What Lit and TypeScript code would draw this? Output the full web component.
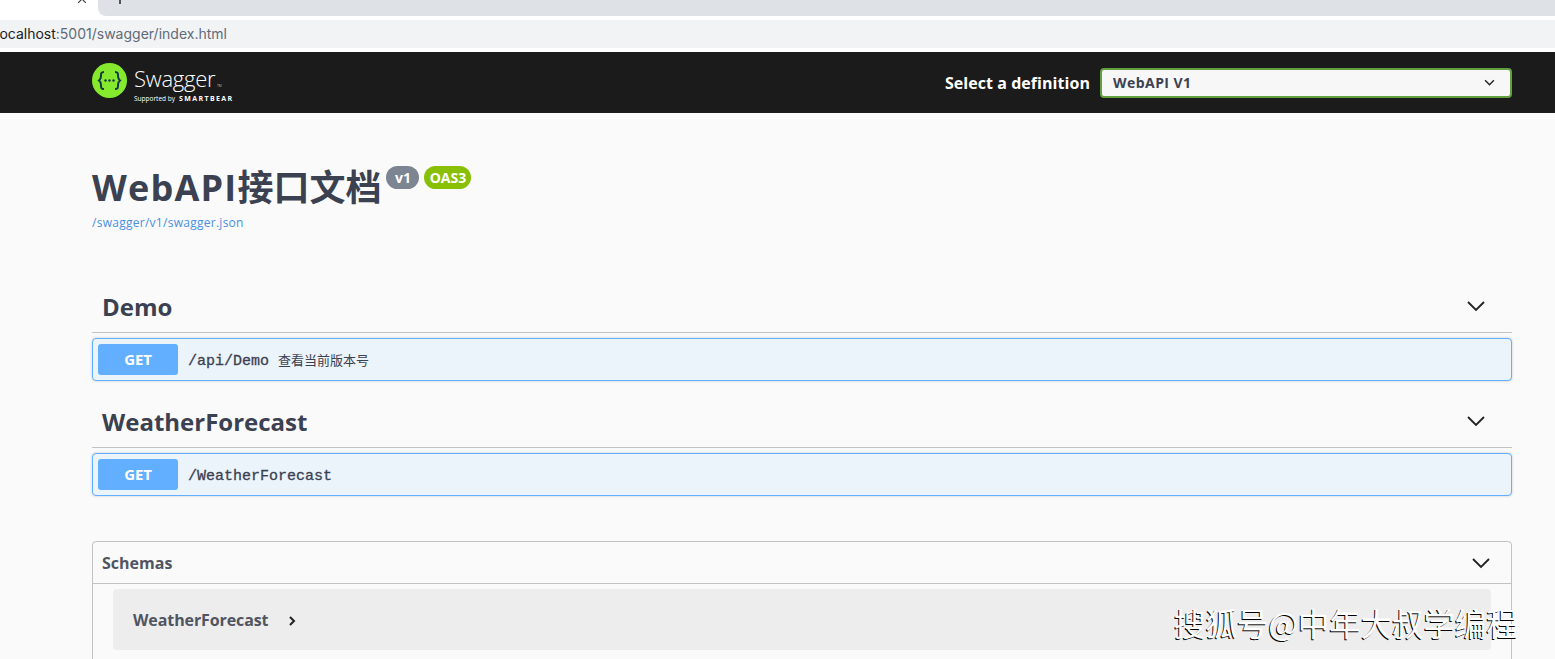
import { LitElement, html, css, svg } from "lit";
import { customElement } from "lit/decorators.js";

const chevronDown = (w: number, sw = 2) => html`
  <svg class="chev" width=${w} height=${w} viewBox="0 0 20 20" fill="none" stroke="#222" stroke-width=${sw}>
    ${svg`<path d="M2 6l8 8 8-8" />`}
  </svg>
`;

@customElement("app-root")
export class AppRoot extends LitElement {
  static styles = css`
    :host {
      display: block;
      position: relative;
      width: 1555px;
      height: 659px;
      overflow: hidden;
      background: #fafafa;
      color: #3b4151;
      font-family: "Open Sans", "Noto Sans CJK SC", sans-serif;
    }

    .tabs {
      display: flex;
      height: 16px;
      background: #fff;
    }
    .tab {
      width: 98px;
      display: flex;
      justify-content: flex-end;
      align-items: flex-start;
      padding-right: 12px;
      box-sizing: border-box;
    }
    .tab svg {
      margin-top: -5px;
    }
    .strip {
      flex: 1;
      background: #dee1e6;
      border-bottom-left-radius: 8px;
      padding-left: 21px;
    }
    .plus {
      width: 2px;
      height: 4px;
      background: #555;
    }
    .addr-wrap {
      padding: 4px 0;
      background: #fff;
    }
    .addr {
      height: 28px;
      line-height: 28px;
      background: #f1f3f4;
      font-family: "Inter", "Noto Sans", sans-serif;
      font-size: 14px;
      color: #5f6b7a;
      white-space: nowrap;
      text-indent: -4px;
    }
    .addr b {
      font-weight: 400;
      color: #202124;
    }

    .topbar {
      height: 61px;
      background: #1b1b1b;
      display: flex;
      align-items: center;
      padding: 0 43px 0 92px;
    }
    .logo {
      display: flex;
      align-items: flex-start;
      gap: 7px;
      height: 35px;
      margin-top: -4px;
      color: #fff;
    }
    .logo-name {
      font-size: 22px;
      line-height: 28px;
      margin-top: 1px;
      font-weight: 300;
      letter-spacing: -0.25px;
      font-family: "Open Sans", sans-serif;
    }
    .tm {
      font-size: 3px;
      line-height: 0;
      letter-spacing: 0;
      margin-left: 2px;
    }
    .logo-sub {
      display: flex;
      align-items: center;
      gap: 4px;
      font-size: 6.5px;
      line-height: 8px;
      margin-top: 3px;
      white-space: nowrap;
    }
    .logo-sub b {
      font-size: 7px;
      letter-spacing: 1.4px;
      font-weight: 700;
    }
    .select-wrap {
      margin-left: auto;
      display: flex;
      align-items: center;
      gap: 10px;
    }
    .select-label {
      color: #fff;
      font-size: 16px;
      font-weight: 700;
      letter-spacing: 0.05px;
    }
    .select {
      width: 412px;
      height: 30px;
      box-sizing: border-box;
      border: 2px solid #62a03f;
      border-radius: 4px;
      background: #f7f7f7;
      display: flex;
      align-items: center;
      justify-content: space-between;
      padding: 0 15px 0 11px;
      font-size: 14px;
      font-weight: 700;
      letter-spacing: 0.45px;
      color: #3b4151;
    }

    main {
      padding: 0 43px 0 92px;
    }
    .info {
      height: 173px;
      padding-top: 51px;
      box-sizing: border-box;
    }
    .title {
      display: flex;
      align-items: flex-start;
      height: 47px;
      font-size: 36px;
      line-height: 48px;
      font-weight: 700;
      white-space: nowrap;
    }
    .latin {
      letter-spacing: 1.2px;
    }
    .badge {
      height: 23px;
      line-height: 23px;
      border-radius: 12px;
      margin-top: 2px;
      color: #fff;
      font-size: 14px;
      font-weight: 700;
      text-align: center;
    }
    .v {
      background: #7d8492;
      margin-left: 5px;
      width: 33px;
    }
    .oas {
      background: #89bf04;
      margin-left: 5px;
      width: 47px;
    }
    .link {
      font-size: 12px;
      line-height: 16px;
      margin-top: 4px;
      color: #4990e2;
      letter-spacing: 0.27px;
    }

    .tag {
      height: 47px;
      box-sizing: border-box;
      border-bottom: 1px solid rgba(59, 65, 81, 0.3);
      display: flex;
      align-items: center;
      justify-content: space-between;
      padding: 0 26px 6px 10px;
      font-size: 24px;
      font-weight: 700;
    }
    .op {
      margin: 5px 0 20px;
      height: 43px;
      box-sizing: border-box;
      border: 1px solid #61affe;
      border-radius: 4px;
      background: #ebf3fb;
      box-shadow: 0 0 3px rgba(0, 0, 0, 0.19);
      display: flex;
      align-items: center;
      padding-left: 5px;
    }
    .method {
      width: 80px;
      height: 31px;
      line-height: 31px;
      text-align: center;
      background: #61affe;
      border-radius: 3px;
      color: #fff;
      font-size: 15px;
      font-weight: 700;
      letter-spacing: -0.2px;
    }
    .path {
      margin-left: 10px;
      padding-top: 3px;
      font-family: "Liberation Mono", monospace;
      font-size: 15px;
      -webkit-text-stroke: 0.3px #3b4151;
      color: #3b4151;
    }
    .desc {
      margin-left: 9px;
      font-family: "Noto Sans CJK SC", sans-serif;
      font-size: 13px;
    }

    .schemas {
      margin-top: 45px;
      height: 140px;
      border: 1px solid rgba(59, 65, 81, 0.3);
      border-radius: 4px;
      box-sizing: border-box;
    }
    .schemas-head {
      height: 42px;
      box-sizing: border-box;
      border-bottom: 1px solid rgba(59, 65, 81, 0.3);
      display: flex;
      align-items: center;
      justify-content: space-between;
      padding: 0 20px 0 9px;
      font-size: 16px;
      font-weight: 700;
      color: #505561;
    }
    .model {
      margin: 5px 20px 0;
      height: 61px;
      background: #ededed;
      border-radius: 4px;
      display: flex;
      align-items: center;
      gap: 19px;
      padding-left: 20px;
      font-size: 16px;
      font-weight: 700;
      letter-spacing: -0.1px;
      color: #505561;
    }
    .model svg {
      margin-top: 2px;
    }

    .watermark {
      position: absolute;
      left: 1174px;
      top: 602px;
      font-family: "Noto Sans CJK SC", sans-serif;
      font-size: 31.4px;
      line-height: 42px;
      color: #fff;
      white-space: nowrap;
      text-shadow: -1px 1px 0 #000;
    }
  `;

  private _op(path: string, desc = "") {
    return html`
      <div class="op">
        <span class="method">GET</span>
        <span class="path">${path}</span>
        ${desc ? html`<span class="desc">${desc}</span>` : ""}
      </div>
    `;
  }

  render() {
    return html`
      <div class="tabs">
        <div class="tab">
          <svg width="8" height="8" viewBox="0 0 8 8" stroke="#444" stroke-width="1.2">
            <path d="M0 0l8 8M8 0l-8 8" />
          </svg>
        </div>
        <div class="strip"><div class="plus"></div></div>
      </div>
      <div class="addr-wrap">
        <div class="addr"><b>localhost</b>:5001/swagger/index.html</div>
      </div>
      <header class="topbar">
        <div class="logo">
          <svg width="35" height="35" viewBox="0 0 35 35">
            <circle cx="17.5" cy="17.5" r="17.5" fill="#85ea2d" />
            <path
              d="M12 9c-3 0-3 1.500-3 4s0 3-2 4.500c2 1.500 2 2 2 4.500s0 4 3 4M23 9c3 0 3 1.500 3 4s0 3 2 4.500c-2 1.500-2 2-2 4.500s0 4-3 4"
              fill="none"
              stroke="#173647"
              stroke-width="2"
            />
            <circle cx="13.500" cy="17.500" r="1.200" fill="#173647" />
            <circle cx="17.500" cy="17.500" r="1.200" fill="#173647" />
            <circle cx="21.500" cy="17.500" r="1.200" fill="#173647" />
          </svg>
          <div>
            <div class="logo-name">Swagger<span class="tm">TM</span></div>
            <div class="logo-sub">Supported by <b>SMARTBEAR</b></div>
          </div>
        </div>
        <div class="select-wrap">
          <span class="select-label">Select a definition</span>
          <div class="select">WebAPI V1 ${chevronDown(11, 2.6)}</div>
        </div>
      </header>
      <main>
        <section class="info">
          <div class="title">
            <span><span class="latin">WebAPI</span>接口文档</span>
            <span class="badge v">v1</span>
            <span class="badge oas">OAS3</span>
          </div>
          <div class="link">/swagger/v1/swagger.json</div>
        </section>
        <div class="tag">Demo ${chevronDown(20, 1.8)}</div>
        ${this._op("/api/Demo", "查看当前版本号")}
        <div class="tag">WeatherForecast ${chevronDown(20, 1.8)}</div>
        ${this._op("/WeatherForecast")}
        <section class="schemas">
          <div class="schemas-head">Schemas ${chevronDown(20, 1.8)}</div>
          <div class="model">
            WeatherForecast
            <svg width="10" height="10" viewBox="0 0 10 10" fill="none" stroke="#222" stroke-width="2">
              <path d="M3 1l4 4-4 4" />
            </svg>
          </div>
        </section>
      </main>
      <div class="watermark">搜狐号@中年大叔学编程</div>
    `;
  }
}
